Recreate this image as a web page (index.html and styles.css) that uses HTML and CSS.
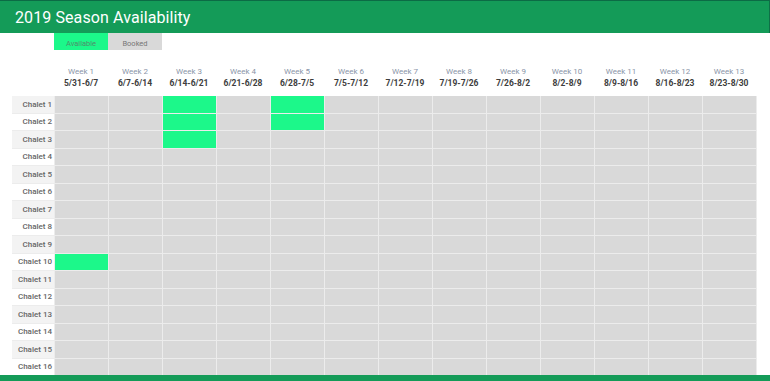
FILE: index.html
```html
<!DOCTYPE html>
<html>
<head>
<meta charset="utf-8">
<link rel="stylesheet" href="styles.css">
</head>
<body>
<header class="topbar"><h1>2019 Season Availability</h1></header>
<div class="legend">
  <div class="legend-item available">Available</div>
  <div class="legend-item booked">Booked</div>
</div>
<div class="grid">
  <div class="corner"></div>
  <div class="wk"><span class="wn">Week 1</span><span class="wd">5/31-6/7</span></div>
  <div class="wk"><span class="wn">Week 2</span><span class="wd">6/7-6/14</span></div>
  <div class="wk"><span class="wn">Week 3</span><span class="wd">6/14-6/21</span></div>
  <div class="wk"><span class="wn">Week 4</span><span class="wd">6/21-6/28</span></div>
  <div class="wk"><span class="wn">Week 5</span><span class="wd">6/28-7/5</span></div>
  <div class="wk"><span class="wn">Week 6</span><span class="wd">7/5-7/12</span></div>
  <div class="wk"><span class="wn">Week 7</span><span class="wd">7/12-7/19</span></div>
  <div class="wk"><span class="wn">Week 8</span><span class="wd">7/19-7/26</span></div>
  <div class="wk"><span class="wn">Week 9</span><span class="wd">7/26-8/2</span></div>
  <div class="wk"><span class="wn">Week 10</span><span class="wd">8/2-8/9</span></div>
  <div class="wk"><span class="wn">Week 11</span><span class="wd">8/9-8/16</span></div>
  <div class="wk"><span class="wn">Week 12</span><span class="wd">8/16-8/23</span></div>
  <div class="wk"><span class="wn">Week 13</span><span class="wd">8/23-8/30</span></div>
</div>
<div class="table" id="table"></div>
<footer class="bottombar"></footer>
<script>
  var avail = {"1-3":1,"2-3":1,"3-3":1,"1-5":1,"2-5":1,"10-1":1};
  var t = document.getElementById('table');
  var html = '';
  for (var r = 1; r <= 16; r++) {
    html += '<div class="label' + (r % 2 ? ' odd' : '') + '">Chalet ' + r + '</div>';
    for (var c = 1; c <= 13; c++) {
      html += '<div class="cell' + (avail[r + '-' + c] ? ' free' : '') + '"></div>';
    }
  }
  t.innerHTML = html;
</script>
</body>
</html>
```
FILE: styles.css
```css
* { box-sizing: border-box; }
html, body { margin: 0; padding: 0; }
body {
  width: 770px;
  height: 381px;
  overflow: hidden;
  background: #fff;
  font-family: Roboto, "Liberation Sans", sans-serif;
  display: flex;
  flex-direction: column;
}
.topbar {
  height: 33px;
  background: #149b58;
  border-top: 1px solid #0c6b45;
  border-right: 1px solid #0e7047;
  display: flex;
  align-items: center;
  padding-left: 15px;
}
.topbar h1 {
  margin: 0;
  color: #fff;
  font-size: 16px;
  font-weight: 400;
  letter-spacing: 0.1px;
}
.legend {
  display: flex;
  margin-left: 54px;
  height: 17px;
}
.legend-item {
  width: 54px;
  font-size: 7.5px;
  display: flex;
  align-items: center;
  justify-content: center;
  padding-top: 4px;
}
.legend-item.available { background: #1cf88a; color: #4f8f6b; }
.legend-item.booked { background: #d9d9d9; color: #777; }
.grid {
  display: grid;
  grid-template-columns: 42px repeat(13, 54px);
  margin-left: 12px;
  margin-top: 16px;
  height: 30px;
}
.wk {
  display: flex;
  flex-direction: column;
  align-items: center;
  line-height: 11.5px;
}
.wn { font-size: 8px; color: #8a95a8; }
.wd { font-size: 8.5px; font-weight: 700; color: #3d3d3d; }
.table {
  display: grid;
  grid-template-columns: 42px repeat(13, 53px);
  grid-template-rows: repeat(16, 16.5px);
  column-gap: 1px;
  row-gap: 1px;
  margin-left: 12px;
  width: 745px;
  background: #ececec;
}
.label {
  background: #fff;
  font-size: 8px;
  font-weight: 500;
  color: #666;
  display: flex;
  align-items: center;
  justify-content: flex-end;
  padding-right: 2px;
}
.label.odd { background: #f3f3f3; }
.cell { background: #d9d9d9; }
.cell.free { background: #1cf88a; }
.bottombar {
  margin-top: auto;
  height: 6px;
  background: #149b58;
}
```
